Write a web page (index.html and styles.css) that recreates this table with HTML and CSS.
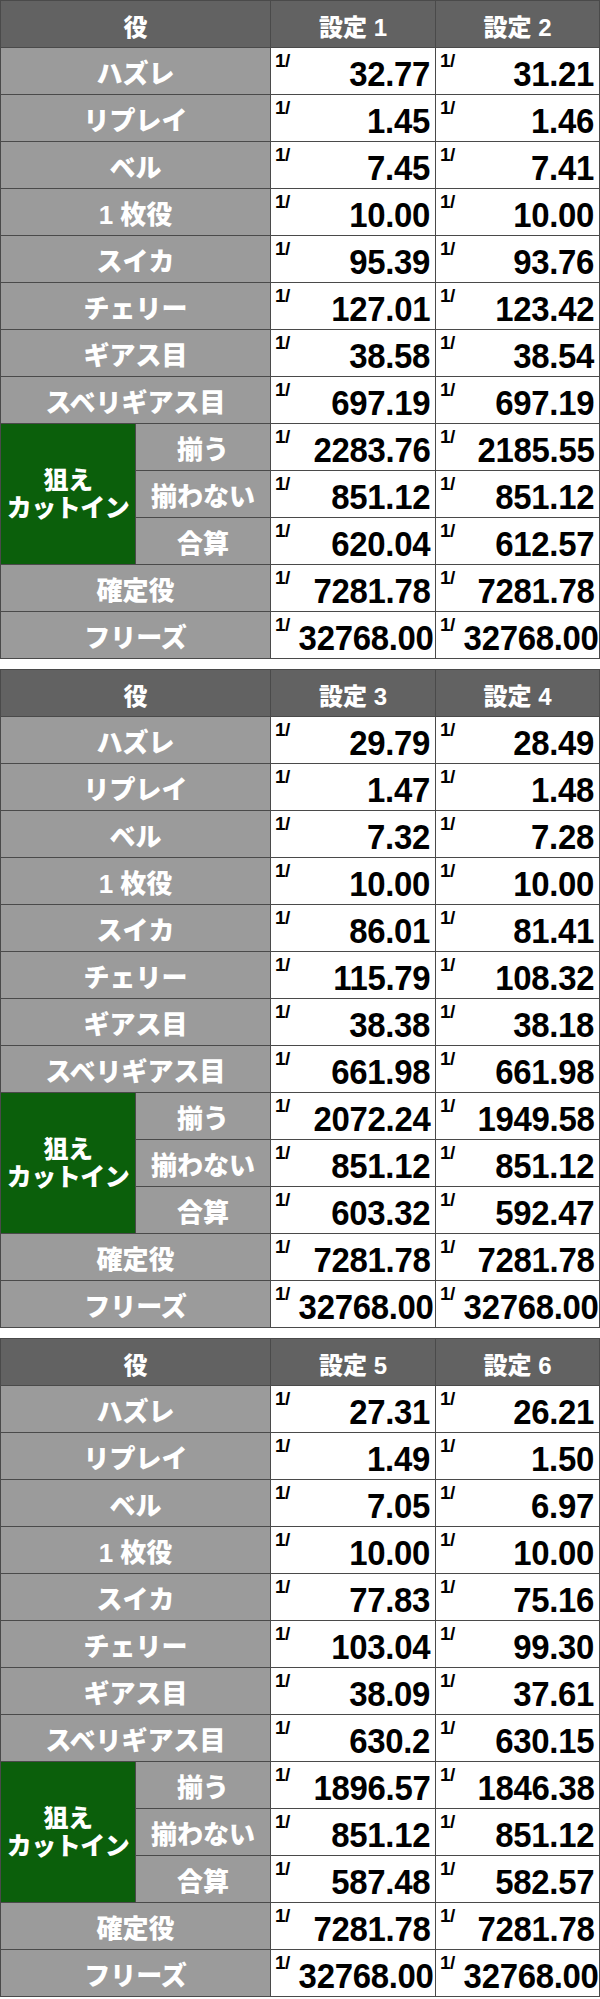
FILE: index.html
```html
<!DOCTYPE html>
<html lang="ja">
<head>
<meta charset="utf-8">
<title>小役確率</title>
<link rel="stylesheet" href="styles.css">
</head>
<body>
<div class="page">

<table class="odds">
<colgroup><col class="c-a"><col class="c-b"><col class="c-v"><col class="c-w"></colgroup>
<tr class="head"><th colspan="2">役</th><th>設定 1</th><th>設定 2</th></tr>
<tr><th colspan="2" class="lbl">ハズレ</th><td><div class="v"><span class="f">1/</span><span class="n">32.77</span></div></td><td><div class="v"><span class="f">1/</span><span class="n">31.21</span></div></td></tr>
<tr><th colspan="2" class="lbl">リプレイ</th><td><div class="v"><span class="f">1/</span><span class="n">1.45</span></div></td><td><div class="v"><span class="f">1/</span><span class="n">1.46</span></div></td></tr>
<tr><th colspan="2" class="lbl">ベル</th><td><div class="v"><span class="f">1/</span><span class="n">7.45</span></div></td><td><div class="v"><span class="f">1/</span><span class="n">7.41</span></div></td></tr>
<tr><th colspan="2" class="lbl">1 枚役</th><td><div class="v"><span class="f">1/</span><span class="n">10.00</span></div></td><td><div class="v"><span class="f">1/</span><span class="n">10.00</span></div></td></tr>
<tr><th colspan="2" class="lbl">スイカ</th><td><div class="v"><span class="f">1/</span><span class="n">95.39</span></div></td><td><div class="v"><span class="f">1/</span><span class="n">93.76</span></div></td></tr>
<tr><th colspan="2" class="lbl">チェリー</th><td><div class="v"><span class="f">1/</span><span class="n">127.01</span></div></td><td><div class="v"><span class="f">1/</span><span class="n">123.42</span></div></td></tr>
<tr><th colspan="2" class="lbl">ギアス目</th><td><div class="v"><span class="f">1/</span><span class="n">38.58</span></div></td><td><div class="v"><span class="f">1/</span><span class="n">38.54</span></div></td></tr>
<tr><th colspan="2" class="lbl">スベリギアス目</th><td><div class="v"><span class="f">1/</span><span class="n">697.19</span></div></td><td><div class="v"><span class="f">1/</span><span class="n">697.19</span></div></td></tr>
<tr><th rowspan="3" class="grp">狙え<br>カットイン</th><th class="lbl">揃う</th><td><div class="v"><span class="f">1/</span><span class="n">2283.76</span></div></td><td><div class="v"><span class="f">1/</span><span class="n">2185.55</span></div></td></tr>
<tr><th class="lbl">揃わない</th><td><div class="v"><span class="f">1/</span><span class="n">851.12</span></div></td><td><div class="v"><span class="f">1/</span><span class="n">851.12</span></div></td></tr>
<tr><th class="lbl">合算</th><td><div class="v"><span class="f">1/</span><span class="n">620.04</span></div></td><td><div class="v"><span class="f">1/</span><span class="n">612.57</span></div></td></tr>
<tr><th colspan="2" class="lbl">確定役</th><td><div class="v"><span class="f">1/</span><span class="n">7281.78</span></div></td><td><div class="v"><span class="f">1/</span><span class="n">7281.78</span></div></td></tr>
<tr><th colspan="2" class="lbl">フリーズ</th><td><div class="v"><span class="f">1/</span><span class="n">32768.00</span></div></td><td><div class="v"><span class="f">1/</span><span class="n">32768.00</span></div></td></tr>
</table>

<table class="odds">
<colgroup><col class="c-a"><col class="c-b"><col class="c-v"><col class="c-w"></colgroup>
<tr class="head"><th colspan="2">役</th><th>設定 3</th><th>設定 4</th></tr>
<tr><th colspan="2" class="lbl">ハズレ</th><td><div class="v"><span class="f">1/</span><span class="n">29.79</span></div></td><td><div class="v"><span class="f">1/</span><span class="n">28.49</span></div></td></tr>
<tr><th colspan="2" class="lbl">リプレイ</th><td><div class="v"><span class="f">1/</span><span class="n">1.47</span></div></td><td><div class="v"><span class="f">1/</span><span class="n">1.48</span></div></td></tr>
<tr><th colspan="2" class="lbl">ベル</th><td><div class="v"><span class="f">1/</span><span class="n">7.32</span></div></td><td><div class="v"><span class="f">1/</span><span class="n">7.28</span></div></td></tr>
<tr><th colspan="2" class="lbl">1 枚役</th><td><div class="v"><span class="f">1/</span><span class="n">10.00</span></div></td><td><div class="v"><span class="f">1/</span><span class="n">10.00</span></div></td></tr>
<tr><th colspan="2" class="lbl">スイカ</th><td><div class="v"><span class="f">1/</span><span class="n">86.01</span></div></td><td><div class="v"><span class="f">1/</span><span class="n">81.41</span></div></td></tr>
<tr><th colspan="2" class="lbl">チェリー</th><td><div class="v"><span class="f">1/</span><span class="n">115.79</span></div></td><td><div class="v"><span class="f">1/</span><span class="n">108.32</span></div></td></tr>
<tr><th colspan="2" class="lbl">ギアス目</th><td><div class="v"><span class="f">1/</span><span class="n">38.38</span></div></td><td><div class="v"><span class="f">1/</span><span class="n">38.18</span></div></td></tr>
<tr><th colspan="2" class="lbl">スベリギアス目</th><td><div class="v"><span class="f">1/</span><span class="n">661.98</span></div></td><td><div class="v"><span class="f">1/</span><span class="n">661.98</span></div></td></tr>
<tr><th rowspan="3" class="grp">狙え<br>カットイン</th><th class="lbl">揃う</th><td><div class="v"><span class="f">1/</span><span class="n">2072.24</span></div></td><td><div class="v"><span class="f">1/</span><span class="n">1949.58</span></div></td></tr>
<tr><th class="lbl">揃わない</th><td><div class="v"><span class="f">1/</span><span class="n">851.12</span></div></td><td><div class="v"><span class="f">1/</span><span class="n">851.12</span></div></td></tr>
<tr><th class="lbl">合算</th><td><div class="v"><span class="f">1/</span><span class="n">603.32</span></div></td><td><div class="v"><span class="f">1/</span><span class="n">592.47</span></div></td></tr>
<tr><th colspan="2" class="lbl">確定役</th><td><div class="v"><span class="f">1/</span><span class="n">7281.78</span></div></td><td><div class="v"><span class="f">1/</span><span class="n">7281.78</span></div></td></tr>
<tr><th colspan="2" class="lbl">フリーズ</th><td><div class="v"><span class="f">1/</span><span class="n">32768.00</span></div></td><td><div class="v"><span class="f">1/</span><span class="n">32768.00</span></div></td></tr>
</table>

<table class="odds">
<colgroup><col class="c-a"><col class="c-b"><col class="c-v"><col class="c-w"></colgroup>
<tr class="head"><th colspan="2">役</th><th>設定 5</th><th>設定 6</th></tr>
<tr><th colspan="2" class="lbl">ハズレ</th><td><div class="v"><span class="f">1/</span><span class="n">27.31</span></div></td><td><div class="v"><span class="f">1/</span><span class="n">26.21</span></div></td></tr>
<tr><th colspan="2" class="lbl">リプレイ</th><td><div class="v"><span class="f">1/</span><span class="n">1.49</span></div></td><td><div class="v"><span class="f">1/</span><span class="n">1.50</span></div></td></tr>
<tr><th colspan="2" class="lbl">ベル</th><td><div class="v"><span class="f">1/</span><span class="n">7.05</span></div></td><td><div class="v"><span class="f">1/</span><span class="n">6.97</span></div></td></tr>
<tr><th colspan="2" class="lbl">1 枚役</th><td><div class="v"><span class="f">1/</span><span class="n">10.00</span></div></td><td><div class="v"><span class="f">1/</span><span class="n">10.00</span></div></td></tr>
<tr><th colspan="2" class="lbl">スイカ</th><td><div class="v"><span class="f">1/</span><span class="n">77.83</span></div></td><td><div class="v"><span class="f">1/</span><span class="n">75.16</span></div></td></tr>
<tr><th colspan="2" class="lbl">チェリー</th><td><div class="v"><span class="f">1/</span><span class="n">103.04</span></div></td><td><div class="v"><span class="f">1/</span><span class="n">99.30</span></div></td></tr>
<tr><th colspan="2" class="lbl">ギアス目</th><td><div class="v"><span class="f">1/</span><span class="n">38.09</span></div></td><td><div class="v"><span class="f">1/</span><span class="n">37.61</span></div></td></tr>
<tr><th colspan="2" class="lbl">スベリギアス目</th><td><div class="v"><span class="f">1/</span><span class="n">630.2</span></div></td><td><div class="v"><span class="f">1/</span><span class="n">630.15</span></div></td></tr>
<tr><th rowspan="3" class="grp">狙え<br>カットイン</th><th class="lbl">揃う</th><td><div class="v"><span class="f">1/</span><span class="n">1896.57</span></div></td><td><div class="v"><span class="f">1/</span><span class="n">1846.38</span></div></td></tr>
<tr><th class="lbl">揃わない</th><td><div class="v"><span class="f">1/</span><span class="n">851.12</span></div></td><td><div class="v"><span class="f">1/</span><span class="n">851.12</span></div></td></tr>
<tr><th class="lbl">合算</th><td><div class="v"><span class="f">1/</span><span class="n">587.48</span></div></td><td><div class="v"><span class="f">1/</span><span class="n">582.57</span></div></td></tr>
<tr><th colspan="2" class="lbl">確定役</th><td><div class="v"><span class="f">1/</span><span class="n">7281.78</span></div></td><td><div class="v"><span class="f">1/</span><span class="n">7281.78</span></div></td></tr>
<tr><th colspan="2" class="lbl">フリーズ</th><td><div class="v"><span class="f">1/</span><span class="n">32768.00</span></div></td><td><div class="v"><span class="f">1/</span><span class="n">32768.00</span></div></td></tr>
</table>

</div>
</body>
</html>
```
FILE: styles.css
```css
html, body {
  margin: 0;
  padding: 0;
  background: #ffffff;
}

.page {
  width: 599px;
  display: flex;
  flex-direction: column;
  gap: 10px;
}

.odds {
  width: 599px;
  border-collapse: collapse;
  table-layout: fixed;
  font-family: "Liberation Sans", "Noto Sans CJK JP", sans-serif;
  font-weight: bold;
}

.c-a { width: 135px; }
.c-b { width: 135px; }
.c-v { width: 165px; }
.c-w { width: 164px; }

.odds th,
.odds td {
  border: 1px solid #4a4a4a;
  padding: 0;
  height: 46px;
}

.head th {
  background: #626262;
  color: #ffffff;
  font-size: 24px;
  font-weight: 900;
  text-align: center;
  vertical-align: middle;
  padding-top: 3px;
  height: 43px;
}

.lbl {
  background: #9b9b9b;
  color: #ffffff;
  font-size: 26px;
  font-weight: 900;
  text-align: center;
  vertical-align: middle;
  padding-top: 2px;
}

.grp {
  background: #0b5f0b;
  color: #ffffff;
  font-size: 25px;
  font-weight: 900;
  line-height: 28px;
  text-align: center;
  vertical-align: middle;
  letter-spacing: -0.5px;
}

.odds td {
  background: #ffffff;
  color: #000000;
  vertical-align: top;
}

.v {
  height: 46px;
  display: flex;
  justify-content: space-between;
  padding: 0 5px 0 4px;
}

.f {
  align-self: flex-start;
  margin-top: 3px;
  font-size: 19px;
  line-height: 19px;
  letter-spacing: -0.5px;
}

.n {
  align-self: flex-end;
  font-size: 35px;
  line-height: 35px;
  letter-spacing: -0.3px;
  margin-bottom: 3px;
  transform: scaleX(0.94);
  transform-origin: right bottom;
}
```
